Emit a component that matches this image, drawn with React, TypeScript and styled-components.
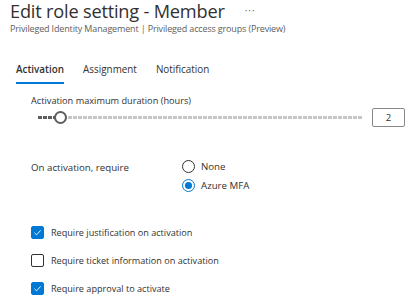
import styled, { createGlobalStyle } from 'styled-components'

const Global = createGlobalStyle`
  body {
    margin: 0;
    background: #ffffff;
    font-family: 'Open Sans', 'Noto Sans', sans-serif;
    color: #323130;
  }
`

const Page = styled.div`
  width: 419px;
  height: 307px;
  overflow: hidden;
`

const Header = styled.header`
  padding: 0 0 0 10px;
`

const TitleRow = styled.div`
  display: flex;
  align-items: center;
  gap: 20px;
  height: 22px;
`

const Title = styled.h1`
  margin: 0;
  font-size: 18.2px;
  font-weight: 400;
  line-height: 20px;
  letter-spacing: -0.2px;
  color: #323130;
`

const More = styled.span`
  font-size: 10px;
  line-height: 12px;
  color: #605e5c;
  letter-spacing: 1px;
  margin-top: -2px;
`

const Subtitle = styled.div`
  margin-top: 2px;
  font-size: 9px;
  line-height: 10px;
  letter-spacing: -0.15px;
  color: #605e5c;
`

const Tabs = styled.nav`
  display: flex;
  gap: 19px;
  padding-left: 16px;
  margin-top: 28px;
`

const Tab = styled.div<{ $active?: boolean }>`
  font-size: 9.9px;
  line-height: 14px;
  padding-bottom: 6px;
  font-weight: ${({ $active }) => ($active ? 600 : 400)};
  color: #323130;
  border-bottom: 2px solid ${({ $active }) => ($active ? '#0078d4' : 'transparent')};
`

const Body = styled.div`
  padding-left: 31px;
`

const Label = styled.div`
  margin-top: 10px;
  font-size: 9.2px;
  line-height: 14px;
  color: #323130;
`

const SliderRow = styled.div`
  display: flex;
  align-items: center;
  margin-top: -1px;
  height: 20px;
  padding-left: 7px;
`

const Track = styled.div`
  position: relative;
  width: 325px;
  height: 3px;
  background: repeating-linear-gradient(
    to right,
    #c8c6c4 0,
    #c8c6c4 4px,
    transparent 4px,
    transparent 5px
  );
`

const Filled = styled.div`
  height: 3px;
  background: repeating-linear-gradient(
    to right,
    #605e5c 0,
    #605e5c 4px,
    transparent 4px,
    transparent 5px
  );
`

const Thumb = styled.div`
  position: absolute;
  top: 50%;
  width: 9px;
  height: 9px;
  margin: -6.5px 0 0 -6.5px;
  border: 2px solid #605e5c;
  border-radius: 50%;
  background: #ffffff;
`

const NumberBox = styled.div`
  margin-left: 9px;
  width: 31px;
  height: 17px;
  border: 1px solid #8a8886;
  border-radius: 2px;
  font-size: 9.5px;
  line-height: 17px;
  text-align: center;
  color: #323130;
`

const RequireRow = styled.div`
  display: flex;
  margin-top: 30.5px;
`

const RequireLabel = styled.div`
  width: 151px;
  font-size: 9.7px;
  line-height: 19px;
`

const RadioGroup = styled.div`
  display: grid;
`

const RadioOption = styled.label`
  display: flex;
  align-items: center;
  gap: 6px;
  height: 18.5px;
  font-size: 9.7px;
  color: #323130;
`

const RadioCircle = styled.span<{ $checked?: boolean }>`
  box-sizing: border-box;
  width: 13px;
  height: 13px;
  border-radius: 50%;
  border: 1px solid ${({ $checked }) => ($checked ? '#0078d4' : '#323130')};
  display: grid;
  place-items: center;

  &::after {
    content: '';
    width: 7px;
    height: 7px;
    border-radius: 50%;
    background: ${({ $checked }) => ($checked ? '#0078d4' : 'transparent')};
  }
`

const Checks = styled.div`
  display: grid;
  gap: 14px;
  margin-top: 30.5px;
`

const CheckRow = styled.label`
  display: flex;
  align-items: center;
  gap: 7px;
  height: 14px;
  font-size: 9.1px;
  color: #323130;
`

const Box = styled.span<{ $checked?: boolean }>`
  box-sizing: border-box;
  width: 13px;
  height: 13px;
  border-radius: 2px;
  border: 1px solid ${({ $checked }) => ($checked ? '#0078d4' : '#323130')};
  background: ${({ $checked }) => ($checked ? '#0078d4' : '#ffffff')};
  display: grid;
  place-items: center;
`

function Check({ checked, label }: { checked?: boolean; label: string }) {
  return (
    <CheckRow>
      <Box $checked={checked}>
        {checked && (
          <svg width="9" height="9" viewBox="0 0 9 9">
            <path d="M1.5 4.8 L3.6 6.8 L7.6 2.4" fill="none" stroke="#ffffff" strokeWidth="0.9" />
          </svg>
        )}
      </Box>
      {label}
    </CheckRow>
  )
}

export default function App() {
  const value = 2
  const pct = 6.8

  return (
    <Page>
      <Global />
      <Header>
        <TitleRow>
          <Title>Edit role setting - Member</Title>
          <More>···</More>
        </TitleRow>
        <Subtitle>Privileged Identity Management | Privileged access groups (Preview)</Subtitle>
      </Header>

      <Tabs>
        <Tab $active>Activation</Tab>
        <Tab>Assignment</Tab>
        <Tab>Notification</Tab>
      </Tabs>

      <Body>
        <Label>Activation maximum duration (hours)</Label>
        <SliderRow>
          <Track>
            <Filled style={{ width: `${pct}%` }} />
            <Thumb style={{ left: `${pct}%` }} />
          </Track>
          <NumberBox>{value}</NumberBox>
        </SliderRow>

        <RequireRow>
          <RequireLabel>On activation, require</RequireLabel>
          <RadioGroup>
            <RadioOption>
              <RadioCircle />
              None
            </RadioOption>
            <RadioOption>
              <RadioCircle $checked />
              Azure MFA
            </RadioOption>
          </RadioGroup>
        </RequireRow>

        <Checks>
          <Check checked label="Require justification on activation" />
          <Check label="Require ticket information on activation" />
          <Check checked label="Require approval to activate" />
        </Checks>
      </Body>
    </Page>
  )
}
